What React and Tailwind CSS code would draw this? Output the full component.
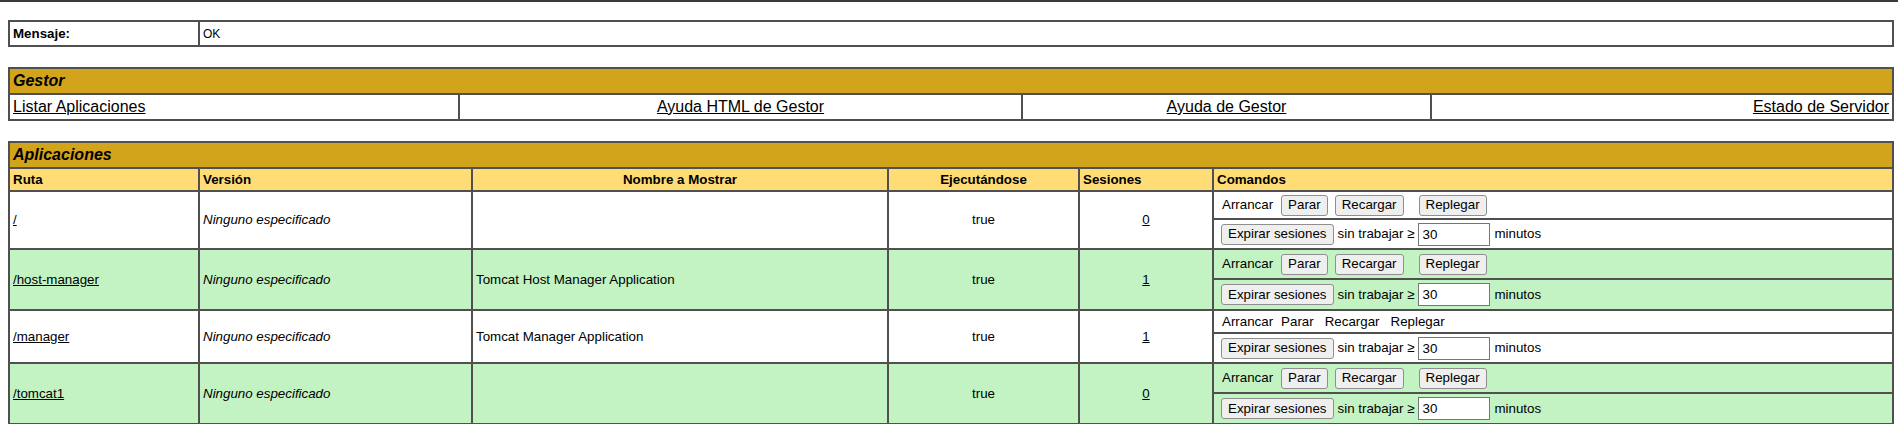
import React from 'react';

const apps = [
  { path: '/', name: '', running: 'true', sessions: '0', bg: 'bg-white', plain: false, h1: 'h-[28px]', h2: 'h-[30px]' },
  { path: '/host-manager', name: 'Tomcat Host Manager Application', running: 'true', sessions: '1', bg: 'bg-[#c3f3c3]', plain: false, h1: 'h-[30px]', h2: 'h-[31px]' },
  { path: '/manager', name: 'Tomcat Manager Application', running: 'true', sessions: '1', bg: 'bg-white', plain: true, h1: 'h-[23px]', h2: 'h-[30px]' },
  { path: '/tomcat1', name: '', running: 'true', sessions: '0', bg: 'bg-[#c3f3c3]', plain: false, h1: 'h-[30px]', h2: 'h-[31px]' },
];

function Btn({ children, className = '' }) {
  return (
    <button
      type="button"
      className={`h-[21px] px-[6px] bg-[#efefef] border border-[#8f8f8f] rounded-[3px] text-[13.33px] leading-none text-black ${className}`}
    >
      {children}
    </button>
  );
}

const cell = 'border border-[#505050] px-[3px]';

function AppRows({ app }) {
  return (
    <>
      <tr className={app.bg}>
        <td rowSpan={2} className={`${cell} align-middle text-[13.33px]`}>
          <a href="#" className="underline text-black">{app.path}</a>
        </td>
        <td rowSpan={2} className={`${cell} align-middle text-[13.33px] italic`}>Ninguno especificado</td>
        <td rowSpan={2} className={`${cell} align-middle text-[13.33px]`}>{app.name}</td>
        <td rowSpan={2} className={`${cell} align-middle text-center text-[13.33px]`}>{app.running}</td>
        <td rowSpan={2} className={`${cell} align-middle text-center text-[13.33px]`}>
          <a href="#" className="underline text-black">{app.sessions}</a>
        </td>
        <td className={`${cell} ${app.h1} align-middle`}>
          {app.plain ? (
            <div className="flex items-center pl-[5px] text-[13.33px]">
              <span>Arrancar</span>
              <span className="ml-[8px]">Parar</span>
              <span className="ml-[11px]">Recargar</span>
              <span className="ml-[11px]">Replegar</span>
            </div>
          ) : (
            <div className="flex items-center pl-[5px] text-[13.33px]">
              <span>Arrancar</span>
              <Btn className="ml-[8px]">Parar</Btn>
              <Btn className="ml-[7px]">Recargar</Btn>
              <Btn className="ml-[15px]">Replegar</Btn>
            </div>
          )}
        </td>
      </tr>
      <tr className={app.bg}>
        <td className={`${cell} ${app.h2} align-middle`}>
          <div className="flex items-center pl-[4px] text-[13.33px]">
            <Btn>Expirar sesiones</Btn>
            <span className="ml-[4px]">sin trabajar ≥</span>
            <input
              defaultValue="30"
              className="ml-[4px] w-[72px] h-[23px] px-[3px] bg-white border border-[#767676] text-[13.33px] text-black"
            />
            <span className="ml-[4px]">minutos</span>
          </div>
        </td>
      </tr>
    </>
  );
}

export default function App() {
  return (
    <div className="min-h-screen bg-white text-black font-['Liberation_Sans',Arial,sans-serif]">
      <div className="h-[2px] bg-[#3a3a3a]" />

      <div className="pl-2 pr-[4px] pt-[18px]">
        <table className="w-full table-fixed border-separate border-spacing-0 border border-[#505050]">
          <colgroup>
            <col className="w-[190px]" />
            <col />
          </colgroup>
          <tbody>
            <tr>
              <td className={`${cell} h-[25px] align-middle text-[13.33px] font-bold`}>Mensaje:</td>
              <td className={`${cell} h-[25px] align-middle text-[12px]`}>OK</td>
            </tr>
          </tbody>
        </table>

        <table className="mt-[20px] w-full table-fixed border-separate border-spacing-0 border border-[#505050]">
          <colgroup>
            <col className="w-[450px]" />
            <col className="w-[563px]" />
            <col className="w-[409px]" />
            <col />
          </colgroup>
          <tbody>
            <tr>
              <td colSpan={4} className={`${cell} h-[25px] align-middle bg-[#d2a41c] text-[16px] font-bold italic`}>Gestor</td>
            </tr>
            <tr>
              <td className={`${cell} h-[26px] align-middle text-[16px]`}>
                <a href="#" className="underline text-black">Listar Aplicaciones</a>
              </td>
              <td className={`${cell} h-[26px] align-middle text-center text-[16px]`}>
                <a href="#" className="underline text-black">Ayuda HTML de Gestor</a>
              </td>
              <td className={`${cell} h-[26px] align-middle text-center text-[16px]`}>
                <a href="#" className="underline text-black">Ayuda de Gestor</a>
              </td>
              <td className={`${cell} h-[26px] align-middle text-right text-[16px]`}>
                <a href="#" className="underline text-black">Estado de Servidor</a>
              </td>
            </tr>
          </tbody>
        </table>

        <table className="mt-[20px] w-full table-fixed border-separate border-spacing-0 border border-[#505050]">
          <colgroup>
            <col className="w-[190px]" />
            <col className="w-[273px]" />
            <col className="w-[416px]" />
            <col className="w-[191px]" />
            <col className="w-[134px]" />
            <col />
          </colgroup>
          <tbody>
            <tr>
              <td colSpan={6} className={`${cell} h-[25px] align-middle bg-[#d2a41c] text-[16px] font-bold italic`}>Aplicaciones</td>
            </tr>
            <tr className="bg-[#ffdc75] text-[13.33px] font-bold">
              <td className={`${cell} h-[23px] align-middle`}>Ruta</td>
              <td className={`${cell} h-[23px] align-middle`}>Versión</td>
              <td className={`${cell} h-[23px] align-middle text-center`}>Nombre a Mostrar</td>
              <td className={`${cell} h-[23px] align-middle text-center`}>Ejecutándose</td>
              <td className={`${cell} h-[23px] align-middle`}>Sesiones</td>
              <td className={`${cell} h-[23px] align-middle`}>Comandos</td>
            </tr>
            {apps.map((app) => (
              <AppRows key={app.path} app={app} />
            ))}
          </tbody>
        </table>
      </div>
    </div>
  );
}
